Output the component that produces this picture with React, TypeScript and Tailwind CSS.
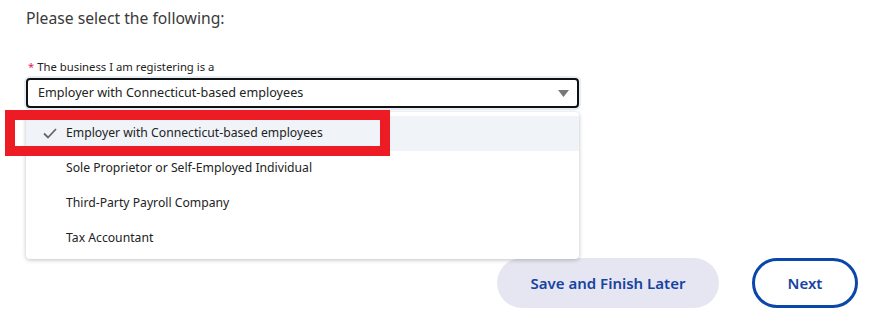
import React from "react";

const options = [
  "Employer with Connecticut-based employees",
  "Sole Proprietor or Self-Employed Individual",
  "Third-Party Payroll Company",
  "Tax Accountant",
];

export default function App() {
  return (
    <div
      className="relative w-[873px] h-[325px] bg-white text-[#333]"
      style={{ fontFamily: '"Noto Sans", "Open Sans", sans-serif' }}
    >
      <div className="pl-[26px] pt-[6px]">
        <h1 className="text-[15.7px] leading-[24px] text-[#3a3a3a]">Please select the following:</h1>
        <div className="mt-[29px] flex items-center text-[11.3px] leading-[16px] text-[#222]">
          <span className="text-[#e0245e] mr-[3px] ml-[2px]">*</span>
          <span>The business I am registering is a</span>
        </div>
        <div className="relative mt-[3px] w-[553px]">
          <div className="h-[30px] rounded-[4px] border-2 border-[#111] shadow-[0_0_0_2px_#e4eef9] flex items-center pl-[10px] pr-[8px] justify-between">
            <span className="text-[12.6px] text-[#222]">Employer with Connecticut-based employees</span>
            <svg width="11" height="7" viewBox="0 0 11 7">
              <path d="M0 0 H11 L5.5 7 Z" fill="#777" />
            </svg>
          </div>
          <div className="absolute left-0 top-[34px] w-[553px] h-[147px] bg-white rounded-[4px] shadow-[0_1px_4px_rgba(0,0,0,0.25)] pt-[4px] z-10">
            {options.map((o, i) => (
              <div
                key={o}
                className={`h-[35px] flex items-center pl-[40px] text-[12.2px] text-[#222] ${i === 0 ? "bg-[#f0f3f8] h-[34px]" : ""}`}
              >
                {i === 0 && (
                  <svg className="absolute left-[17px]" width="14" height="11" viewBox="0 0 14 11">
                    <path d="M1 5.5 L5 9.5 L13 1" fill="none" stroke="#666" strokeWidth="1.8" />
                  </svg>
                )}
                <span>{o}</span>
              </div>
            ))}
          </div>
        </div>
      </div>
      <div className="absolute left-[5px] top-[110px] w-[385px] h-[46px] border-[10px] border-[#ed1c24] z-20" />
      <div className="flex justify-end gap-[33px] pr-[15px] mt-[150px]">
        <button className="w-[222px] h-[50px] rounded-full bg-[#e6e6f2] text-[#1743a0] text-[15px] font-semibold">
          Save and Finish Later
        </button>
        <button className="w-[106px] h-[50px] rounded-full border-[3px] border-[#0a47a8] text-[#1743a0] text-[15px] font-semibold">
          Next
        </button>
      </div>
    </div>
  );
}
